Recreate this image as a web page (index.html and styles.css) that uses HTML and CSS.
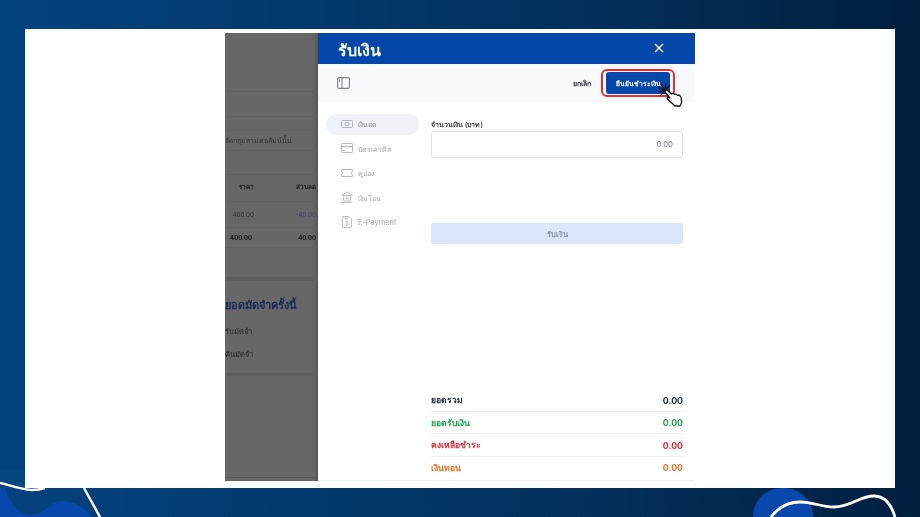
FILE: index.html
```html
<!DOCTYPE html>
<html lang="th">
<head>
<meta charset="utf-8">
<title>รับเงิน</title>
<link rel="stylesheet" href="styles.css">
</head>
<body>
<div class="slide">
  <svg class="deco" width="920" height="517" viewBox="0 0 920 517" fill="none">
    <path d="M0 483 C8 486 18 488 25 488 L25 470 L0 470Z" fill="#03477f"/>
    <path d="M5 488 C10 505 20 515 30 515 C45 515 50 501 63 501 C75 501 85 508 92 517 L0 517 L0 488Z" fill="#0847ab"/>
    <path d="M0 483 C10 485 22 490 32 490 C38 490 42 489 45 488" stroke="#fff" stroke-width="2.5"/>
    <path d="M84 488 L100 517" stroke="#fff" stroke-width="2.5"/>
    <path d="M753 517 C753 500 766 488 783 488 C800 488 813 500 813 517Z" fill="#0847ab"/>
    <path d="M771 517 C778 508 788 502 800 502 C814 502 820 507 834 507 C850 507 860 496 874 496 C886 496 892 507 895 517" stroke="#fff" stroke-width="2.8"/>
  </svg>
  <main class="card">
    <section class="backdrop">
      <div class="bg-row bg-r1"></div>
      <div class="bg-row bg-r2"></div>
      <div class="bg-row bg-r3"></div>
      <div class="bg-row bg-text">จัดกลุ่มตามคอลัมน์นั้น</div>
      <div class="bg-row bg-r4"></div>
      <div class="bg-table bg-table-head"><span>ราคา</span><span>ส่วนลด</span></div>
      <div class="bg-table bg-table-row"><span>400.00</span><span class="purple">-40.00</span></div>
      <div class="bg-table bg-table-row bold"><span>400.00</span><span>40.00</span></div>
      <div class="bg-gap"></div>
      <div class="bg-deposit">
        <h3>ยอดมัดจำครั้งนี้</h3>
        <p>รับมัดจำ</p>
        <p>คืนมัดจำ</p>
      </div>
      <div class="bg-end"></div>
    </section>
    <section class="modal">
      <header class="modal-head">
        <h1>รับเงิน</h1>
        <svg class="close" width="12" height="12" viewBox="0 0 12 12"><path d="M2 2L10 10M10 2L2 10" stroke="#fff" stroke-width="1.4" fill="none"/></svg>
      </header>
      <div class="toolbar">
        <svg class="panel-icon" width="13" height="12" viewBox="0 0 13 12" fill="none"><rect x=".6" y=".6" width="11.800" height="10.800" rx="1.500" stroke="#7a828e" stroke-width="1.100"/><path d="M5 .6V11.400" stroke="#7a828e" stroke-width="1.100"/><path d="M2.700 2.500V5" stroke="#7a828e"/></svg>
        <span class="cancel">ยกเลิก</span>
        <div class="confirm-ring"><button class="confirm">ยืนยันชำระเงิน</button></div>
        <svg class="hand" width="28" height="28" viewBox="0 0 28 28" fill="none">
          <path d="M9 9L5 3M9 9L10 2.500M9 9L2 6.500M9 9L2 11M9 9L4 15M9 9L14 4" stroke="#111" stroke-width="1.100"/>
          <path d="M9 11C8 9.500 10 8.500 11.500 9.500L15.500 13C16.500 12 18 12.500 18.500 13.500C19.500 12.800 21 13.300 21.500 14.500C22.500 14 24 14.500 24.800 16C26 19 26 22 24 25L19 25C16 22 13 20 11.500 18C10.500 17 11.500 15.500 13 16.500L14 17Z" fill="#fff" stroke="#111" stroke-width="1.300" stroke-linejoin="round"/>
        </svg>
      </div>
      <div class="modal-body">
        <nav class="methods">
          <div class="method active">
            <svg width="12" height="8" viewBox="0 0 12 8" fill="none"><rect x=".5" y=".5" width="11" height="7" rx="1" stroke="#aeb4bd"/><ellipse cx="6" cy="4" rx="2.200" ry="1.700" stroke="#aeb4bd"/></svg>
            <span>เงินสด</span>
          </div>
          <div class="method">
            <svg width="12" height="10" viewBox="0 0 12 10" fill="none"><rect x=".5" y=".5" width="11" height="9" rx="1" stroke="#b4bac2"/><path d="M.5 3.500H11.500" stroke="#b4bac2" stroke-width="1.300"/><path d="M2 7.500H4" stroke="#b4bac2"/></svg>
            <span>บัตรเครดิต</span>
          </div>
          <div class="method">
            <svg width="12" height="8" viewBox="0 0 12 8" fill="none"><path d="M1 .5H11C11.300.5 11.500.7 11.500 1V2.500C10 3 10 5 11.500 5.500V7C11.500 7.300 11.300 7.500 11 7.500H1C.7 7.500.5 7.300.5 7V5.500C2 5 2 3 .5 2.500V1C.5.7.7.500 1 .5Z" stroke="#b4bac2"/></svg>
            <span>คูปอง</span>
          </div>
          <div class="method">
            <svg width="12" height="12" viewBox="0 0 12 12" fill="none"><path d="M1 4L6 1L11 4V4.500H1Z" stroke="#b4bac2" stroke-width=".9"/><path d="M2.500 5.500V9M5 5.500V9M7 5.500V9M9.500 5.500V9M1.500 10H10.500M.5 11.500H11.500" stroke="#b4bac2" stroke-width=".9"/></svg>
            <span>เงินโอน</span>
          </div>
          <div class="method">
            <svg width="10" height="12" viewBox="0 0 10 12" fill="none"><path d="M1 .5H7L9.500 3V11C9.500 11.300 9.300 11.500 9 11.500H1C.7 11.500.5 11.300.5 11V1C.5.7.7.500 1 .5Z" stroke="#b4bac2" stroke-width=".9"/><path d="M3 .5V3H6V.5" stroke="#b4bac2" stroke-width=".8"/><path d="M6.300 6.200C5.500 5.300 3.700 5.500 3.700 6.600C3.700 7.800 6.300 7.200 6.300 8.400C6.300 9.500 4.500 9.700 3.700 8.800M5 4.800V10" stroke="#b4bac2" stroke-width=".7"/></svg>
            <span class="latin">E-Payment</span>
          </div>
        </nav>
        <div class="pay">
          <label class="amount-label">จำนวนเงิน (บาท)</label>
          <div class="amount-input">0.00</div>
          <button class="receive">รับเงิน</button>
          <dl class="summary">
            <div class="sum-row"><dt>ยอดรวม</dt><dd>0.00</dd></div>
            <div class="sum-row green"><dt>ยอดรับเงิน</dt><dd>0.00</dd></div>
            <div class="sum-row red"><dt>คงเหลือชำระ</dt><dd>0.00</dd></div>
            <div class="sum-row orange"><dt>เงินทอน</dt><dd>0.00</dd></div>
          </dl>
        </div>
      </div>
    </section>
  </main>
</div>
</body>
</html>
```
FILE: styles.css
```css
* { box-sizing: border-box; }
html, body { margin: 0; padding: 0; }
body { width: 920px; height: 517px; overflow: hidden; font-family: "Inter", "Noto Sans", "Liberation Sans", sans-serif; }
.slide {
  position: relative;
  width: 920px;
  height: 517px;
  overflow: hidden;
  padding: 29px 25px;
  background: linear-gradient(90deg, #03437f 0%, #033a6e 30%, #03305a 65%, #011f3f 100%);
}
.deco { position: absolute; left: 0; top: 0; }
.card {
  position: relative;
  width: 870px;
  height: 459px;
  background: #fff;
  padding: 4px 200px 7px;
  display: flex;
  filter: blur(.3px);
}
.backdrop {
  width: 93px;
  height: 448px;
  background: #676767;
  overflow: hidden;
  flex: none;
  color: #2b2b2b;
  font-size: 8px;
  box-shadow: inset -4px 0 4px -3px #4c4c4c;
}
.bg-row { border-bottom: 1px solid #626262; }
.bg-r1 { height: 59px; }
.bg-r2 { height: 25px; }
.bg-r3 { height: 14px; }
.bg-text { height: 20px; line-height: 19px; white-space: nowrap; overflow: hidden; color: #333; font-size: 6.900px; }
.bg-r4 { height: 24px; }
.bg-table {
  display: grid;
  grid-template-columns: 29px 62px;
  text-align: right;
  border-bottom: 1px solid #636363;
  white-space: nowrap;
  align-items: center;
}
.bg-table-head { height: 27px; padding-bottom: 3px; font-size: 6.500px; font-weight: 700; color: #1e1e1e; }
.bg-table-row { height: 26px; font-size: 6.300px; color: #2c2c2c; }
.bg-table-row.bold { height: 20px; font-weight: 700; font-size: 6px; color: #171717; grid-template-columns: 27px 64px; }
.purple { color: #4d3a6b; }
.bg-gap { height: 33px; border-bottom: 4px solid #5f5f5f; }
.bg-deposit { height: 95px; border-bottom: 3px solid #5f5f5f; }
.bg-deposit h3 { margin: 0; padding-top: 16px; height: 44px; font-size: 11px; line-height: 16px; font-weight: 700; color: #1a2a5e; white-space: nowrap; }
.bg-deposit p { margin: 0; height: 23px; font-size: 7.500px; line-height: 14px; color: #262626; white-space: nowrap; }
.bg-end { height: 102px; border-bottom: 1px solid #5a5a5a; }
.modal {
  width: 377px;
  height: 448px;
  flex: none;
  background: #fff;
  display: flex;
  flex-direction: column;
  border-bottom: 1px solid #eceef1;
}
.modal-head {
  height: 31px;
  flex: none;
  background: #0347ab;
  display: flex;
  align-items: center;
  justify-content: space-between;
  padding: 0 30px 0 20px;
  color: #fff;
}
.modal-head h1 { margin: 0; font-size: 16px; line-height: 31px; font-weight: 600; position: relative; top: 2px; }
.close { margin-top: -1px; }
.toolbar {
  height: 38px;
  flex: none;
  background: #f8f9fb;
  display: flex;
  align-items: center;
  padding: 0 20px 0 19px;
  position: relative;
}
.panel-icon { margin-right: auto; }
.cancel { font-size: 7.200px; font-weight: 600; color: #3a424f; margin-right: 10px; }
.confirm-ring {
  width: 74px;
  height: 28px;
  border: 2px solid #ea2a34;
  border-radius: 6px;
  padding: 1px 3px;
  background: #fff;
}
.confirm {
  display: block;
  width: 100%;
  height: 100%;
  border: 0;
  border-radius: 3px;
  background: #0347ab;
  color: #fff;
  font-family: inherit;
  font-size: 6.700px;
  font-weight: 700;
  padding: 0;
}
.hand { position: absolute; left: 338px; top: 17px; }
.modal-body { flex: 1; display: flex; min-height: 0; padding: 12px 12px 0 8px; }
.methods { width: 93px; flex: none; display: flex; flex-direction: column; gap: 3.500px; }
.method {
  height: 21px;
  display: flex;
  align-items: center;
  border-radius: 11px;
  font-size: 7px;
  color: #a0a6af;
  padding-left: 15px;
}
.method svg { width: 12px; flex: none; margin-right: 5px; margin-top: -2px; }
.method.active { background: #eff2f7; color: #868d98; }
.latin { font-size: 7.400px; }
.pay { flex: 1; margin-left: 12px; display: flex; flex-direction: column; min-width: 0; }
.amount-label { font-size: 7px; line-height: 10px; height: 11px; font-weight: 600; color: #3f4651; margin-top: 6px; }
.amount-input {
  height: 27px;
  border: 1px solid #dfe3ea;
  border-radius: 3px;
  background: #fff;
  text-align: right;
  padding-right: 9px;
  font-size: 7.800px;
  line-height: 25px;
  color: #737a84;
}
.receive {
  height: 21px;
  margin-top: 65px;
  border: 0;
  border-radius: 2px;
  background: #dbe8fb;
  color: #8b97a8;
  font-family: inherit;
  font-size: 7.500px;
  font-weight: 600;
  padding: 0;
}
.summary { margin: auto 0 1px; }
.sum-row {
  height: 22.300px;
  display: flex;
  justify-content: space-between;
  align-items: center;
  font-size: 8.600px;
  font-weight: 700;
  color: #202a39;
  border-bottom: 1px solid #eef1f5;
}
.sum-row:last-child { border-bottom: 0; }
.sum-row dt { margin: 0; }
.sum-row dd { margin: 0; font-size: 8.800px; font-weight: 700; }
.green { color: #22a755; }
.red { color: #e02b38; }
.orange { color: #f26f21; }
```
